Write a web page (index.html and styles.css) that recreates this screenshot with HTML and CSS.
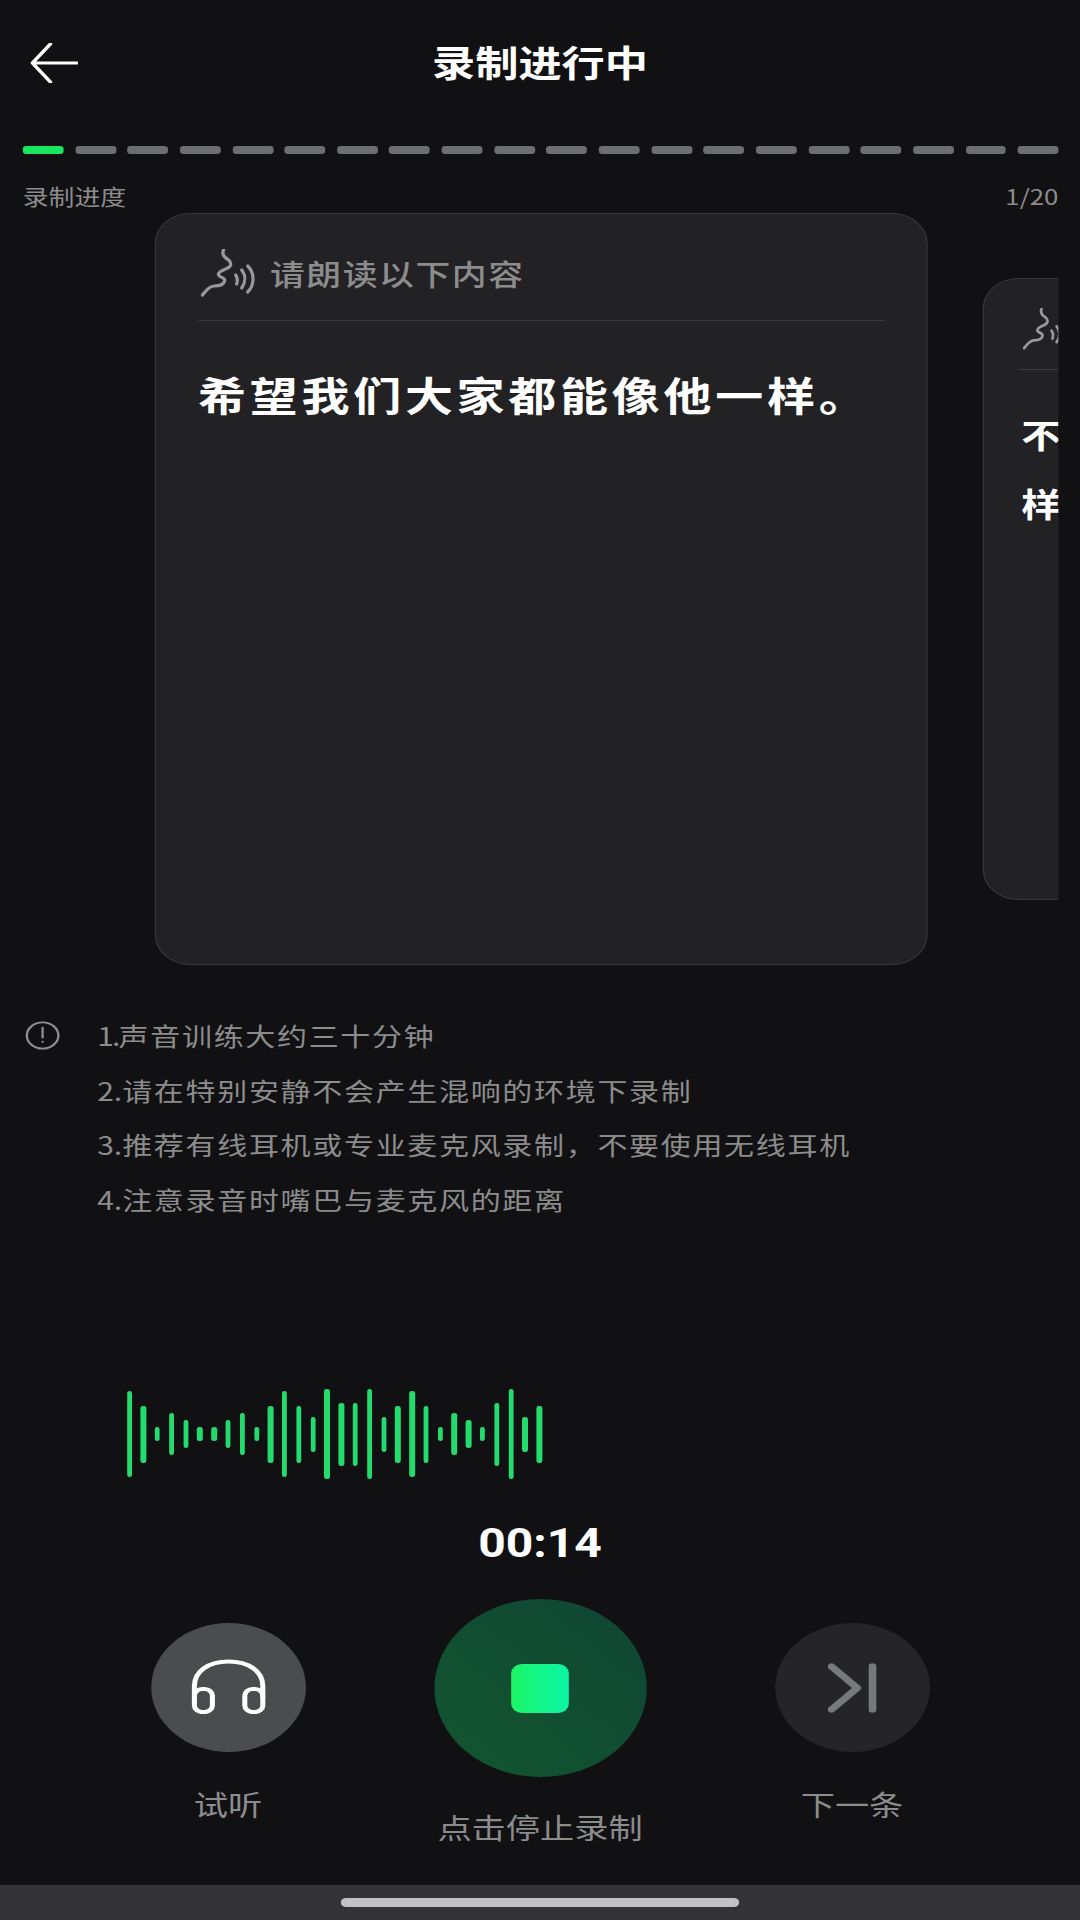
FILE: index.html
```html
<!DOCTYPE html>
<html lang="zh-CN">
<head>
<meta charset="utf-8">
<title>录制进行中</title>
<link rel="stylesheet" href="styles.css">
</head>
<body>
<main class="app">
  <header class="topbar">
    <svg class="back" viewBox="0 0 40 40" aria-hidden="true"><path d="M39 20H2M17 1 2 20l15 19"/></svg>
    <h1 class="title">录制进行中</h1>
    <span></span>
  </header>

  <div class="progress">
    <i class="seg seg-on"></i><i class="seg"></i><i class="seg"></i><i class="seg"></i><i class="seg"></i>
    <i class="seg"></i><i class="seg"></i><i class="seg"></i><i class="seg"></i><i class="seg"></i>
    <i class="seg"></i><i class="seg"></i><i class="seg"></i><i class="seg"></i><i class="seg"></i>
    <i class="seg"></i><i class="seg"></i><i class="seg"></i><i class="seg"></i><i class="seg"></i>
  </div>
  <div class="progress-label"><span>录制进度</span><span>1/20</span></div>

  <section class="carousel">
    <article class="card">
      <div class="card-head">
        <svg class="mouth" viewBox="0 0 56 48" preserveAspectRatio="none" aria-hidden="true">
          <path d="M23 1c-2 4 0 7 5 10 3 3 3 6-1 8-4 2-10 4-9 7 1 3 7 2 6 6-1 4-6 5-10 5-6 0-8 5-12 9"/>
          <path d="M35 26c2 3 2 6 1 9M41 21c4 5 4 12 0 18M47 17c7 7 7 19 0 26"/>
        </svg>
        <span class="card-hint">请朗读以下内容</span>
      </div>
      <p class="card-text">希望我们大家都能像他一样。</p>
    </article>
    <article class="card card-next">
      <div class="card-head">
        <svg class="mouth" viewBox="0 0 56 48" preserveAspectRatio="none" aria-hidden="true">
          <path d="M23 1c-2 4 0 7 5 10 3 3 3 6-1 8-4 2-10 4-9 7 1 3 7 2 6 6-1 4-6 5-10 5-6 0-8 5-12 9"/>
          <path d="M35 26c2 3 2 6 1 9M41 21c4 5 4 12 0 18M47 17c7 7 7 19 0 26"/>
        </svg>
      </div>
      <p class="card-text">不<br>样</p>
    </article>
  </section>

  <section class="notes">
    <svg class="info" viewBox="0 0 30 30" aria-hidden="true"><circle cx="15" cy="15" r="13.6"/><path d="M15 7v10"/><circle class="dot" cx="15" cy="21.5" r="1.1"/></svg>
    <ol class="note-list">
      <li><span class="num num-narrow">1.</span>声音训练大约三十分钟</li>
      <li><span class="num">2.</span>请在特别安静不会产生混响的环境下录制</li>
      <li><span class="num">3.</span>推荐有线耳机或专业麦克风录制，不要使用无线耳机</li>
      <li><span class="num">4.</span>注意录音时嘴巴与麦克风的距离</li>
    </ol>
  </section>

  <div class="wave">
    <i class="bar h86"></i><i class="bar h57"></i><i class="bar h14"></i><i class="bar h42"></i><i class="bar h28"></i>
    <i class="bar h14"></i><i class="bar h14"></i><i class="bar h28"></i><i class="bar h42"></i><i class="bar h14"></i>
    <i class="bar h57"></i><i class="bar h86"></i><i class="bar h57"></i><i class="bar h35"></i><i class="bar h90"></i>
    <i class="bar h63"></i><i class="bar h63"></i><i class="bar h90"></i><i class="bar h35"></i><i class="bar h57"></i>
    <i class="bar h86"></i><i class="bar h57"></i><i class="bar h14"></i><i class="bar h42"></i><i class="bar h28"></i>
    <i class="bar h14"></i><i class="bar h63"></i><i class="bar h90"></i><i class="bar h35"></i><i class="bar h57"></i>
  </div>

  <div class="timer">00:14</div>

  <section class="controls">
    <div class="control control-side">
      <div class="round round-listen">
        <svg class="headphones" viewBox="0 0 63 55" aria-hidden="true">
          <path d="M3 38V27C3 12 15 2.5 31.5 2.5S60 12 60 27v11"/>
          <rect x="3" y="30" width="15" height="23" rx="6.5"/>
          <rect x="45" y="30" width="15" height="23" rx="6.5"/>
        </svg>
      </div>
      <span class="control-label">试听</span>
    </div>
    <div class="control">
      <div class="round round-stop"><span class="stop-square"></span></div>
      <span class="control-label">点击停止录制</span>
    </div>
    <div class="control control-side">
      <div class="round round-next">
        <svg class="next" viewBox="0 0 42 50" aria-hidden="true"><path d="M3 3l22 22L3 47M38 3v44"/></svg>
      </div>
      <span class="control-label">下一条</span>
    </div>
  </section>

  <footer class="navbar"><span class="pill"></span></footer>
</main>
</body>
</html>
```

FILE: styles.css
```css
* { box-sizing: border-box; }

html, body {
  margin: 0;
  height: 1920px;
  background: #111113;
  overflow: hidden;
}

/* The capture is 1.2x wider than it is tall: lay out at 900px and stretch once. */
.app {
  width: 900px;
  height: 1920px;
  transform: scaleX(1.2);
  transform-origin: 0 0;
  display: flex;
  flex-direction: column;
  color: #8c8c8c;
  font-family: "Noto Sans CJK SC", "Noto Sans", sans-serif;
}

.topbar {
  height: 126px;
  padding: 0 25px;
  display: grid;
  grid-template-columns: 1fr auto 1fr;
  align-items: center;
}
.back { width: 40px; height: 40px; fill: none; stroke: #fff; stroke-width: 3; stroke-linecap: round; stroke-linejoin: round; }
.title { margin: 0 0 4px; font-size: 36px; line-height: 44px; font-weight: 700; color: #fff; }

.progress { margin-top: 20px; padding: 0 18px 0 19px; display: flex; gap: 9.7px; }
.seg { flex: 1; height: 8px; border-radius: 3px; background: #6d6e72; }
.seg-on { background: #19e65f; }

.progress-label {
  margin-top: 27px;
  padding: 0 18px 0 19px;
  display: flex;
  justify-content: space-between;
  font-size: 21.5px;
  line-height: 30px;
}

.carousel {
  margin: 2px 18px 0 19px;
  height: 752px;
  display: flex;
  align-items: center;
  gap: 46px;
  padding-left: 110px;
  overflow: hidden;
}
.card {
  flex: none;
  width: 644px;
  height: 752px;
  padding: 0 35px;
  border: 1px solid #38383b;
  border-radius: 30px;
  background: #222225;
}
.card-head {
  padding: 35px 0 23px 2px;
  display: flex;
  align-items: center;
  gap: 11px;
  border-bottom: 1px solid #3a3a3d;
}
.mouth { width: 47px; height: 48px; flex: none; fill: none; stroke: #999; stroke-width: 3.2; stroke-linecap: round; stroke-linejoin: round; }
.card-hint { font-size: 29px; line-height: 40px; letter-spacing: 1.3px; font-weight: 500; color: #8c8c8c; }
.card-text {
  margin: 38px 0 0;
  font-size: 40px;
  line-height: 70px;
  letter-spacing: 3.1px;
  font-weight: 700;
  color: #fff;
}

.card-next { width: 532px; height: 622px; padding: 0 28px; }
.card-next .card-head { padding: 29px 0 19px 4px; }
.card-next .mouth { width: 39px; height: 42px; }
.card-next .card-text { margin-top: 30px; padding-left: 3px; font-size: 33px; line-height: 69px; letter-spacing: 0; }

.notes { margin-top: 43px; padding-left: 21px; display: flex; align-items: flex-start; gap: 31px; }
.info { margin-top: 13px; width: 29px; height: 29px; flex: none; fill: none; stroke: #8f8f8f; stroke-width: 2; stroke-linecap: round; }
.info .dot { fill: #8f8f8f; stroke: none; }
.note-list { margin: 0; padding: 0; list-style: none; font-size: 25px; line-height: 54.5px; letter-spacing: 1.4px; color: #8c8c8c; }
.num { letter-spacing: 0; }
.num-narrow { letter-spacing: -1.5px; }

.wave { margin-top: 163px; padding-left: 105.5px; height: 90px; display: flex; align-items: center; gap: 7.4px; }
.bar { flex: none; width: 4.4px; border-radius: 2.2px; background: #24dc6e; }
.h14 { height: 14px; }
.h28 { height: 28px; }
.h35 { height: 35px; }
.h42 { height: 42px; }
.h57 { height: 57px; }
.h63 { height: 63px; }
.h86 { height: 86px; }
.h90 { height: 90px; }

.timer { margin-top: 40px; text-align: center; font-family: Roboto, sans-serif; font-size: 40px; line-height: 50px; font-weight: 700; color: #fff; }

.controls { margin-top: 30px; display: grid; grid-template-columns: repeat(3, 260px); justify-content: center; }
.control { display: flex; flex-direction: column; align-items: center; }
.control-side { padding-top: 24px; }
.round { width: 129px; height: 129px; border-radius: 50%; display: flex; align-items: center; justify-content: center; }
.round-listen { background: #4a4c4e; }
.round-next { background: #252527; }
.round-stop { width: 177px; height: 178px; background: linear-gradient(45deg, #12562f, #0f4534); }
.stop-square { width: 48px; height: 49px; border-radius: 9px; background: linear-gradient(90deg, #1cf566, #0af5a8); }
.headphones { margin-top: -2px; width: 63px; height: 55px; fill: none; stroke: #fff; stroke-width: 4.2; stroke-linecap: round; }
.next { width: 41px; height: 50px; fill: none; stroke: #77787a; stroke-width: 6.5; stroke-linecap: round; stroke-linejoin: round; }
.control-label { margin-top: 32px; font-size: 28.5px; line-height: 40px; color: #8c8c8c; }
.round-stop + .control-label { margin-top: 30px; }

.navbar { margin-top: auto; height: 35px; padding-top: 13px; display: flex; justify-content: center; background: #333336; }
.pill { width: 332px; height: 9px; border-radius: 5px; background: #c2c2c2; }
```
